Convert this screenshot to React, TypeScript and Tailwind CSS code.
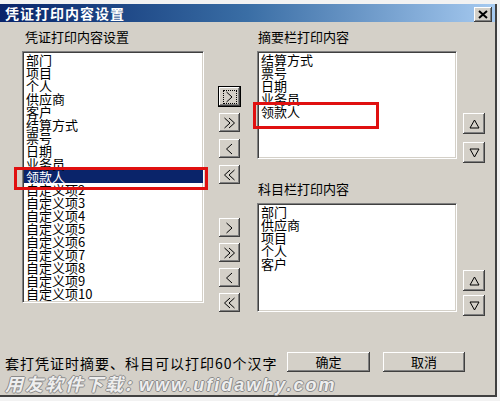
import React from 'react'

const allItems = [
  '部门', '项目', '个人', '供应商', '客户', '结算方式', '票号', '日期', '业务员', '领款人',
  '自定义项2', '自定义项3', '自定义项4', '自定义项5', '自定义项6', '自定义项7', '自定义项8', '自定义项9', '自定义项10',
]
const summaryItems = ['结算方式', '票号', '日期', '业务员', '领款人']
const subjectItems = ['部门', '供应商', '项目', '个人', '客户']

const font = "font-['Noto_Sans_CJK_SC','Noto_Sans',sans-serif]"
const raised =
  'bg-[#d4d0c8] shadow-[inset_-1px_-1px_0_#404040,inset_1px_1px_0_#ffffff,inset_-2px_-2px_0_#808080,inset_2px_2px_0_#d4d0c8]'
const sunken =
  'bg-white border border-t-[#808080] border-l-[#808080] border-b-white border-r-white shadow-[inset_1px_1px_0_#404040,inset_-1px_-1px_0_#d4d0c8]'

function Chevrons({ dir, double }: { dir: 'r' | 'l'; double?: boolean }) {
  const one = dir === 'r' ? 'M1.5 1 L7 6 L1.5 11' : 'M7 1 L1.5 6 L7 11'
  const w = double ? 13 : 9
  return (
    <svg width={w} height="12" viewBox={`0 0 ${w} 12`}>
      <path d={one} fill="none" stroke="#000" strokeWidth="1" />
      {double && <path d={one} transform="translate(4.5 0)" fill="none" stroke="#000" strokeWidth="1" />}
    </svg>
  )
}

function ArrowButton({ dir, double, focus }: { dir: 'r' | 'l'; double?: boolean; focus?: boolean }) {
  return (
    <div
      className={`w-[21px] h-[19px] flex items-center justify-center ${raised} ${
        focus ? 'outline outline-1 outline-black' : ''
      }`}
    >
      <div className={`flex items-center justify-center w-[14px] h-[14px] ${focus ? 'border border-dotted border-black' : ''}`}>
        <Chevrons dir={dir} double={double} />
      </div>
    </div>
  )
}

function ArrowGroup({ first, gap }: { first?: boolean; gap: string }) {
  return (
    <div className={`flex flex-col ${gap}`}>
      <ArrowButton dir="r" focus={first} />
      <ArrowButton dir="r" double />
      <ArrowButton dir="l" />
      <ArrowButton dir="l" double />
    </div>
  )
}

function Tri({ up }: { up?: boolean }) {
  return (
    <div className={`w-[22px] h-[21px] flex items-center justify-center ${raised}`}>
      <svg width="11" height="10" viewBox="0 0 11 10">
        <polygon
          points={up ? '5.5,1 10,9 1,9' : '1,1 10,1 5.5,9'}
          fill="none"
          stroke="#000"
          strokeWidth="1"
        />
      </svg>
    </div>
  )
}

function ListBox({ items, selected, className }: { items: string[]; selected?: number; className: string }) {
  return (
    <div className={`${sunken} ${className} overflow-hidden pt-[1px] pl-[1px]`}>
      {items.map((item, i) => (
        <div
          key={item}
          className={`h-[13px] leading-[13px] text-[13px] pl-[2px] whitespace-nowrap ${
            selected === i ? 'bg-[#0a246a] text-white' : 'text-black'
          }`}
        >
          {item}
        </div>
      ))}
    </div>
  )
}

export default function App() {
  return (
    <div className={`w-[500px] h-[401px] bg-[#f2f2f2] pt-[4px] ${font} relative`}>
      <div className="w-[497px] h-[393px] bg-[#d4d0c8] border-r-2 border-b-2 border-[#404040] flex flex-col">
        {/* Title bar */}
        <div className="h-[18px] bg-gradient-to-r from-[#0a246a] via-[#3a6ea5] to-[#a6caf0] flex items-center justify-between pl-[5px] pr-[3px]">
          <span className="text-white font-bold text-[14px] leading-[18px] tracking-[1px]">凭证打印内容设置</span>
          <div className={`w-[18px] h-[15px] mt-[3px] flex items-center justify-center ${raised}`}>
            <svg width="10" height="9" viewBox="0 0 10 9">
              <path d="M1 1 L9 8 M9 1 L1 8" stroke="#000" strokeWidth="2" />
            </svg>
          </div>
        </div>

        {/* Body */}
        <div className="flex items-start pl-[22px] pt-[7px]">
          <div className="flex flex-col">
            <div className="h-[22px] text-[13px] leading-[16px] pl-[3px] text-black">凭证打印内容设置</div>
            <ListBox items={allItems} selected={9} className="w-[182px] h-[252px]" />
          </div>

          <div className="ml-[15px] flex flex-col">
            <div className="mt-[58px]">
              <ArrowGroup first gap="gap-[7px]" />
            </div>
            <div className="mt-[34px]">
              <ArrowGroup gap="gap-[6px]" />
            </div>
          </div>

          <div className="ml-[17px] flex flex-col">
            <div className="h-[22px] text-[13px] leading-[16px] pl-[1px] text-black">摘要栏打印内容</div>
            <div className="flex items-start h-[108px]">
              <ListBox items={summaryItems} className="w-[200px] h-[108px]" />
              <div className="ml-[6px] mt-[62px] flex flex-col gap-[8px]">
                <Tri up />
                <Tri />
              </div>
            </div>
            <div className="mt-[22px] h-[22px] text-[13px] leading-[16px] pl-[1px] text-black">科目栏打印内容</div>
            <div className="flex items-start h-[109px]">
              <ListBox items={subjectItems} className="w-[200px] h-[109px]" />
              <div className="ml-[6px] mt-[67px] flex flex-col gap-[4px]">
                <Tri up />
                <Tri />
              </div>
            </div>
          </div>
        </div>

        {/* Footer */}
        <div className="mt-[40px] flex items-center pl-[5px] h-[20px]">
          <div className="w-[282px] text-[14px] tracking-[1px] text-black leading-[20px] pt-[2px]">
            套打凭证时摘要、科目可以打印60个汉字
          </div>
          <button className={`w-[83px] h-[20px] text-[13px] text-black ${raised}`}>确定</button>
          <button className={`ml-[13px] w-[82px] h-[20px] text-[13px] text-black ${raised}`}>取消</button>
        </div>
        <div className="mt-[1px] pl-[5px] h-[20px] text-[18px] leading-[20px] italic font-bold text-[#eeeeee] tracking-[2px] [text-shadow:1px_0_0_#8a8a8a,-1px_0_0_#8a8a8a,0_1px_0_#8a8a8a,0_-1px_0_#8a8a8a] whitespace-nowrap">
          用友软件下载: <span className="font-['Liberation_Sans',sans-serif] tracking-[2px]">www.ufidawhy.com</span>
        </div>
      </div>

      {/* Red annotation boxes */}
      <div className="absolute left-[14px] top-[167px] w-[194px] h-[23px] border-[3px] border-[#e01010]" />
      <div className="absolute left-[253px] top-[102px] w-[126px] h-[27px] border-[3px] border-[#e01010]" />
    </div>
  )
}
